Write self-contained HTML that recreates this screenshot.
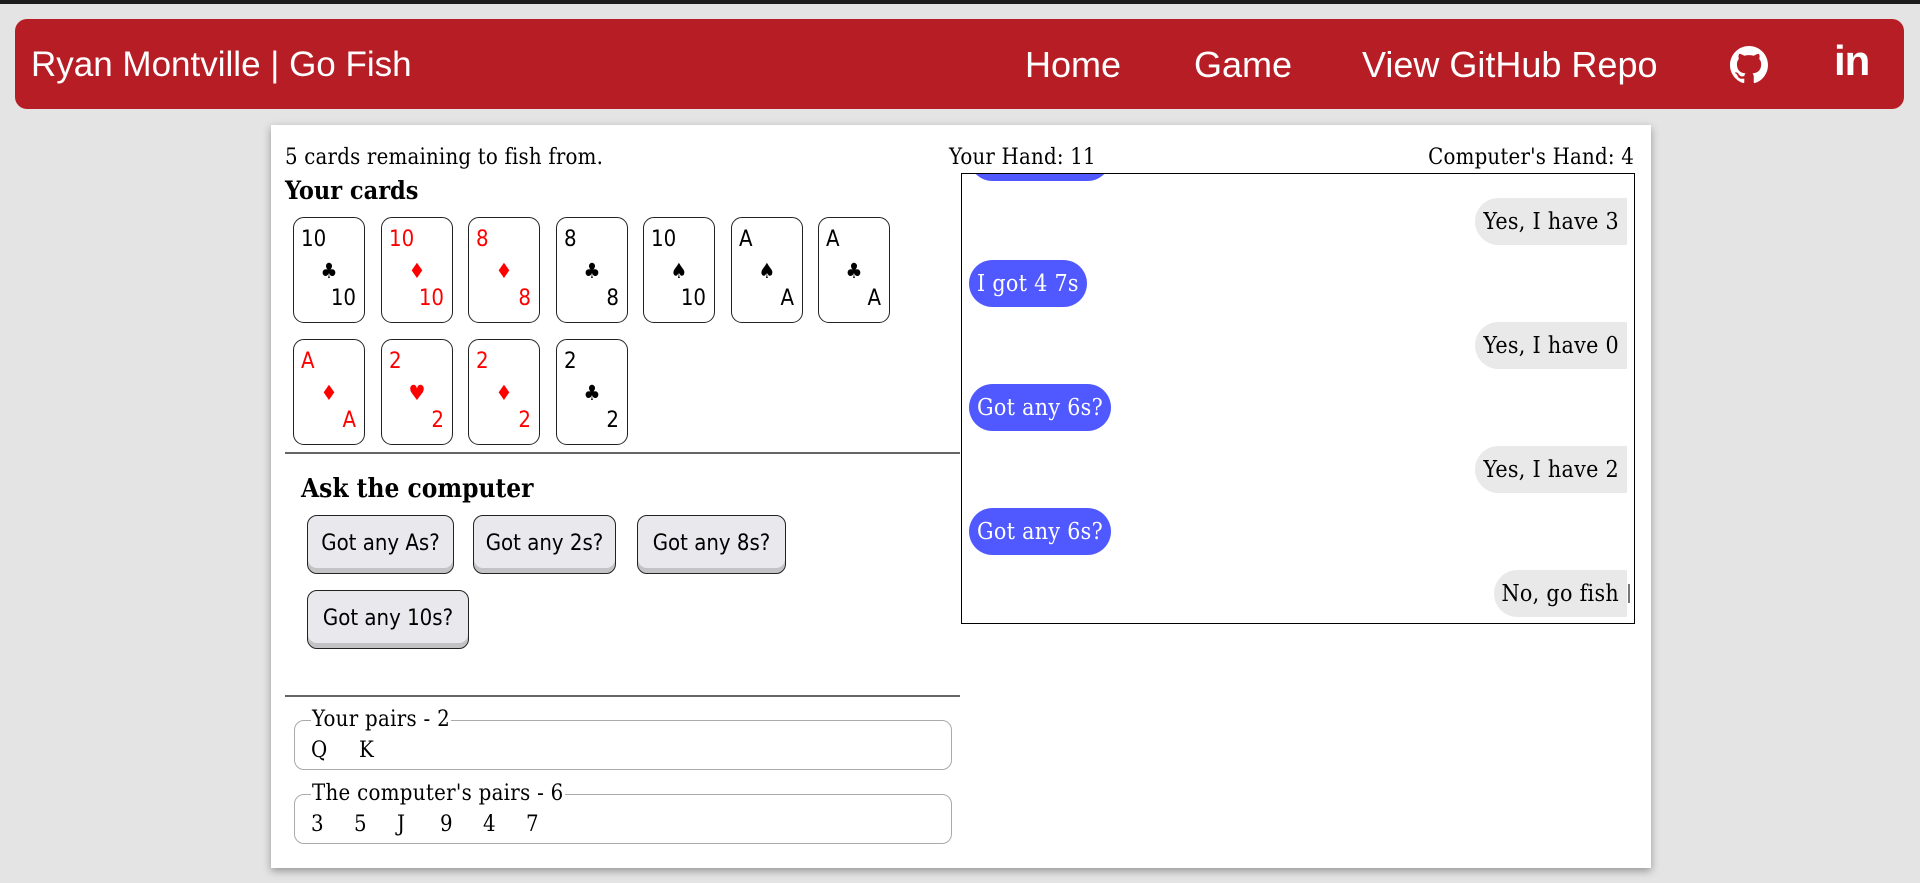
<!DOCTYPE html>
<html><head><meta charset="utf-8"><style>
*{box-sizing:border-box;margin:0;padding:0}
body{width:1920px;height:883px;background:#e4e4e4;position:relative;overflow:hidden;font-family:"DejaVu Serif Condensed","DejaVu Serif",serif;color:#000}
.topbar{position:absolute;left:0;top:0;width:1920px;height:4px;background:#1c1c1c}
.nav{position:absolute;left:15px;top:19px;width:1889px;height:90px;background:#b71d25;border-radius:12px;color:#fff;font-family:"Liberation Sans",sans-serif}
.nav .t{position:absolute;font-size:36px;top:25px;white-space:nowrap}
.panel{position:absolute;left:271px;top:125px;width:1380px;height:743px;background:#fff;box-shadow:0 3px 8px rgba(0,0,0,.35)}
.abs{position:absolute;white-space:nowrap}
.txt{font-size:22px;letter-spacing:0.2px}
.card{position:absolute;width:72px;height:106px;border:1px solid #222;border-radius:11px;font-family:"DejaVu Sans Condensed","DejaVu Sans",sans-serif;font-size:22px}
.card .a{position:absolute;left:7px;top:9px}
.card .s{position:absolute;left:0;width:100%;text-align:center;top:41px;font-size:21px}
.card .b{position:absolute;right:8px;top:68px}
.red{color:#f00}
.btn{position:absolute;height:59px;border:1px solid #222;border-radius:10px;background:#e9e9ed;box-shadow:inset 0 -5px 0 #c3c3c6;font-family:"DejaVu Sans Condensed","DejaVu Sans",sans-serif;font-size:22px;text-align:center;line-height:56px}
.hr{position:absolute;left:14px;width:675px;height:2px;background:#666}
.fs{position:absolute;left:23px;width:658px;height:50px;border:1.5px solid #aaa;border-radius:10px}
.fs .lg{position:absolute;left:16px;top:-14px;background:#fff;padding:0 1px;font-size:22px;letter-spacing:0.3px}
.fs .c{position:absolute;left:16px;top:17px;font-size:22px;white-space:nowrap}
.fs .c span{display:inline-block;width:43px}
.chat{position:absolute;left:690px;top:48px;width:674px;height:451px;border:1.5px solid #000;overflow:hidden}
.bub{position:absolute;height:47px;line-height:49px;font-size:23px;padding:0 8px;letter-spacing:0.3px}
.blue{left:7px;background:#4f59ff;color:#fff;border-radius:24px}
.grey{right:7px;background:#e9e9e9;border-radius:24px 0 0 24px}
</style></head><body>
<div class="topbar"></div>
<div class="nav">
<div class="t" style="left:16px;font-size:35px;top:26px">Ryan Montville | Go Fish</div>
<div class="t" style="left:1010px">Home</div>
<div class="t" style="left:1179px">Game</div>
<div class="t" style="left:1347px">View GitHub Repo</div>
<svg style="position:absolute;left:1715px;top:27px" width="38" height="38" viewBox="0 0 16 16"><path fill="#fff" d="M8 0C3.58 0 0 3.580 0 8c0 3.54 2.290 6.53 5.470 7.590.4.07.55-.17.55-.38 0-.19-.01-.82-.01-1.490-2.010.37-2.530-.49-2.690-.94-.09-.23-.48-.94-.82-1.130-.28-.15-.68-.52-.01-.53.63-.01 1.080.58 1.230.82.72 1.210 1.870.87 2.330.66.07-.52.28-.87.51-1.070-1.780-.2-3.640-.89-3.640-3.950 0-.87.31-1.590.82-2.150-.08-.2-.36-1.020.08-2.120 0 0 .67-.21 2.200.82.64-.18 1.320-.27 2-.27.68 0 1.360.09 2 .27 1.530-1.040 2.200-.82 2.200-.82.44 1.100.16 1.920.08 2.120.51.56.82 1.270.82 2.150 0 3.070-1.870 3.750-3.650 3.950.29.25.54.73.54 1.480 0 1.070-.01 1.930-.01 2.200 0 .21.15.46.55.38A8.013 8.013 0 0016 8c0-4.420-3.580-8-8-8z"/></svg>
<div class="t" style="left:1819px;top:18px;font-size:42px;font-weight:bold;font-family:'Liberation Sans',sans-serif;letter-spacing:-1px">in</div>
</div>
<div class="panel">
<div class="abs txt" style="left:14px;top:20px">5 cards remaining to fish from.</div>
<div class="abs" style="left:14px;top:51px;font-size:25px;font-weight:bold">Your cards</div>
<div class="abs txt" style="left:678px;top:20px">Your Hand: 11</div>
<div class="abs txt" style="right:17px;top:20px">Computer's Hand: 4</div>

<div class="card" style="left:22px;top:92px"><span class="a">10</span><span class="s">♣</span><span class="b">10</span></div>
<div class="card red" style="left:110px;top:92px"><span class="a">10</span><span class="s">♦</span><span class="b">10</span></div>
<div class="card red" style="left:197px;top:92px"><span class="a">8</span><span class="s">♦</span><span class="b">8</span></div>
<div class="card" style="left:285px;top:92px"><span class="a">8</span><span class="s">♣</span><span class="b">8</span></div>
<div class="card" style="left:372px;top:92px"><span class="a">10</span><span class="s">♠</span><span class="b">10</span></div>
<div class="card" style="left:460px;top:92px"><span class="a">A</span><span class="s">♠</span><span class="b">A</span></div>
<div class="card" style="left:547px;top:92px"><span class="a">A</span><span class="s">♣</span><span class="b">A</span></div>
<div class="card red" style="left:22px;top:214px"><span class="a">A</span><span class="s">♦</span><span class="b">A</span></div>
<div class="card red" style="left:110px;top:214px"><span class="a">2</span><span class="s">♥</span><span class="b">2</span></div>
<div class="card red" style="left:197px;top:214px"><span class="a">2</span><span class="s">♦</span><span class="b">2</span></div>
<div class="card" style="left:285px;top:214px"><span class="a">2</span><span class="s">♣</span><span class="b">2</span></div>

<div class="hr" style="top:327px"></div>
<div class="abs" style="left:30px;top:349px;font-size:26px;font-weight:bold">Ask the computer</div>
<div class="btn" style="left:36px;top:390px;width:147px">Got any As?</div>
<div class="btn" style="left:202px;top:390px;width:143px">Got any 2s?</div>
<div class="btn" style="left:366px;top:390px;width:149px">Got any 8s?</div>
<div class="btn" style="left:36px;top:465px;width:162px">Got any 10s?</div>
<div class="hr" style="top:570px"></div>

<div class="fs" style="top:595px"><span class="lg">Your pairs - 2</span><span class="c"><span style="width:48px">Q</span><span>K</span></span></div>
<div class="fs" style="top:669px"><span class="lg">The computer's pairs - 6</span><span class="c"><span>3</span><span>5</span><span>J</span><span>9</span><span>4</span><span>7</span></span></div>

<div class="chat">
<div class="bub blue" style="top:-40px;width:142px">&nbsp;</div>
<div class="bub grey" style="top:24px">Yes, I have 3</div>
<div class="bub blue" style="top:86px">I got 4 7s</div>
<div class="bub grey" style="top:148px">Yes, I have 0</div>
<div class="bub blue" style="top:210px">Got any 6s?</div>
<div class="bub grey" style="top:272px">Yes, I have 2</div>
<div class="bub blue" style="top:334px">Got any 6s?</div>
<div class="bub grey" style="top:396px">No, go fish</div>
<div style="position:absolute;right:4px;top:410px;width:2px;height:19px;background:#777"></div>
</div>
</div>
</body></html>
